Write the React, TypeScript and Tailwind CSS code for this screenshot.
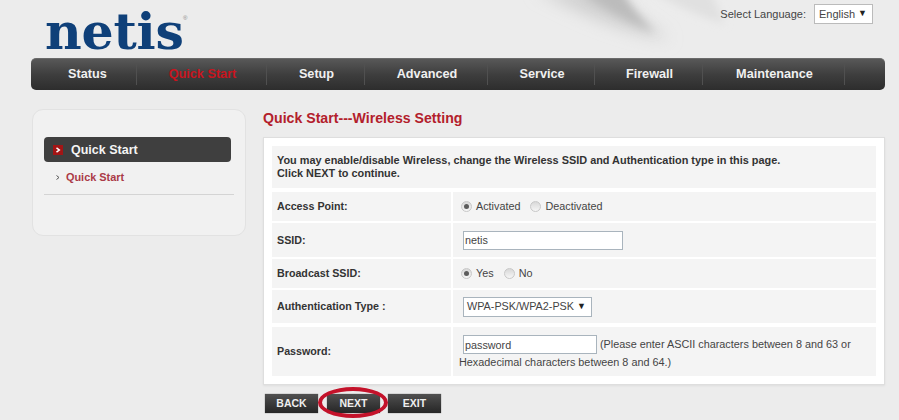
const F = '[font-family:"Liberation_Sans",Arial,sans-serif]';

const navItems: [string, string][] = [
  ["Status", "w-[100px]"],
  ["Quick Start", "w-[130px]"],
  ["Setup", "w-[98px]"],
  ["Advanced", "w-[123px]"],
  ["Service", "w-[107px]"],
  ["Firewall", "w-[108px]"],
  ["Maintenance", "w-[142px]"],
];

function Radio({ on }: { on?: boolean }) {
  return (
    <span className="relative mr-[4px] inline-block h-[11px] w-[11px] rounded-full border border-[#c8c8c8] bg-gradient-to-b from-[#d8d8d8] to-[#f6f6f6]">
      {on && <span className="absolute left-[2px] top-[2px] h-[5px] w-[5px] rounded-full bg-[#5c5c5c]" />}
    </span>
  );
}

function Row({ label, h, mb, children }: { label: string; h: string; mb: string; children: React.ReactNode }) {
  return (
    <div className={`flex gap-[2px] ${h} ${mb}`}>
      <div className="flex w-[179px] items-center bg-[#f4f4f4] pl-[5px] text-[10.7px] font-bold text-[#333]">{label}</div>
      <div className="flex flex-1 items-center bg-[#f4f4f4] pl-[8px] text-[10.8px] text-[#444]">{children}</div>
    </div>
  );
}

function TextBox({ value, w }: { value: string; w: string }) {
  return (
    <input
      readOnly
      value={value}
      className={`h-[19px] ${w} border border-[#a9b4bd] bg-white pl-[1px] text-[10.8px] text-[#444] outline-none`}
    />
  );
}

function Btn({ children }: { children: React.ReactNode }) {
  return (
    <div className="flex h-[19px] w-[53px] items-center justify-center bg-gradient-to-b from-[#505050] to-[#262626] text-[10.5px] font-bold text-[#eee] shadow-[0_0_1px_#666]">
      {children}
    </div>
  );
}

export default function App() {
  return (
    <div className={`relative h-[420px] w-[899px] overflow-hidden bg-[#ececec] ${F}`}>
      <svg className="absolute left-[500px] top-0 h-[70px] w-[320px]" viewBox="0 0 320 70">
        <defs>
          <filter id="b1" x="-40%" y="-60%" width="180%" height="220%"><feGaussianBlur stdDeviation="8" /></filter>
          <filter id="b2" x="-40%" y="-60%" width="180%" height="220%"><feGaussianBlur stdDeviation="4" /></filter>
        </defs>
        <path d="M35 -10 C65 5 110 30 170 40 C145 22 125 8 110 -10Z" fill="#d0d0d0" filter="url(#b1)" />
        <path d="M75 -10 C100 5 125 22 155 33 C138 16 128 3 122 -10Z" fill="#bcbcbc" filter="url(#b2)" />
        <path d="M150 -10 C175 6 200 16 225 24 L210 -10Z" fill="#e0e0e0" filter="url(#b2)" />
      </svg>

      <div className="relative flex h-[58px] justify-between">
        <div className="relative pl-[45px]">
          <span className="block font-['DejaVu_Serif',serif] text-[50.5px] font-bold leading-[64px] tracking-[-0.2px] text-[#0f4079]">
            netis
          </span>
          <span className="absolute left-[183px] top-[14px] text-[6px] leading-[8px] text-[#888]">®</span>
        </div>
        <div className="mt-[4px] flex h-[20px] items-center pr-[26px]">
          <span className="mr-[8px] text-[11px] text-[#444]">Select Language:</span>
          <div className="flex h-[20px] w-[59px] items-center justify-between border border-[#bbb] bg-white pl-[4px] pr-[5px] text-[11px] text-[#444]">
            English <span className="text-[9px] text-[#222]">▼</span>
          </div>
        </div>
      </div>

      <nav className="relative mx-[31px] mr-[14px] flex h-[32px] rounded-[5px] border-t border-[#6a6a6a] bg-gradient-to-b from-[#585858] via-[#3e3e3e] to-[#2d2d2d] pl-[6px]">
        {navItems.map(([t, w]) => (
          <div key={t} className={`flex ${w} items-center justify-center py-[5px]`}>
            <span className={`flex-1 pl-[2px] text-center text-[12.7px] font-bold ${t === "Quick Start" ? "text-[#c9141e]" : "text-[#f0f0f0]"}`}>{t}</span>
            <span className="h-full w-px bg-[#505050]" />
          </div>
        ))}
      </nav>

      <div className="relative flex pl-[32px] pr-[15px] pt-[19px]">
        <aside className="h-[127px] w-[214px] rounded-[11px] border border-[#e2e2e2] bg-[#f1f1f1] px-[11px] pt-[27px]">
          <div className="flex h-[25px] w-[187px] items-center rounded-[4px] bg-[#3f3f3f] pl-[9px]">
            <span className="flex h-[10px] w-[10px] items-center justify-center bg-[#a31515]">
              <svg width="6" height="6" viewBox="0 0 6 6" fill="none" stroke="#fff" strokeWidth="1.5"><path d="M1.5 0.8 L4.3 3 L1.5 5.2" /></svg>
            </span>
            <span className="ml-[8px] pt-[1px] text-[12.5px] font-bold text-[#f4f4f4]">Quick Start</span>
          </div>
          <div className="flex h-[30px] items-center pl-[12px]">
            <svg width="4" height="5" viewBox="0 0 4 5" fill="none" stroke="#555"><path d="M0.5 0.5 L3 2.5 L0.5 4.5" /></svg>
            <span className="ml-[6px] text-[10.9px] font-bold text-[#ab3a47]">Quick Start</span>
          </div>
          <div className="mt-[2px] h-px w-[190px] bg-[#d4d4d4]" />
        </aside>

        <main className="ml-[17px] flex-1">
          <h1 className="h-[28px] text-[14.15px] font-bold leading-[18px] text-[#b3202b]">Quick Start---Wireless Setting</h1>
          <div className="h-[248px] w-[622px] border border-[#dedede] bg-white px-[8px] pt-[8px] shadow-[0_1px_2px_#ddd]">
            <div className="mb-[4px] flex h-[42px] flex-col justify-center bg-[#f4f4f4] pl-[5px] text-[10.9px] font-bold leading-[13px] text-[#333]">
              <p>You may enable/disable Wireless, change the Wireless SSID and Authentication type in this page.</p>
              <p>Click NEXT to continue.</p>
            </div>
            <Row label="Access Point:" h="h-[29px]" mb="mb-[2px]">
              <Radio on /><span className="mr-[10px]">Activated</span><Radio /><span>Deactivated</span>
            </Row>
            <Row label="SSID:" h="h-[34px]" mb="mb-[2px]">
              <span className="ml-[2px] flex"><TextBox value="netis" w="w-[160px]" /></span>
            </Row>
            <Row label="Broadcast SSID:" h="h-[29px]" mb="mb-[2px]">
              <Radio on /><span className="mr-[10px]">Yes</span><Radio /><span>No</span>
            </Row>
            <Row label="Authentication Type :" h="h-[33px]" mb="mb-[4px]">
              <div className="ml-[2px] flex h-[20px] w-[129px] items-center justify-between border border-[#a9b4bd] bg-white pl-[3px] pr-[5px] text-[10.8px] text-[#444]">
                WPA-PSK/WPA2-PSK <span className="text-[9px] text-[#222]">▼</span>
              </div>
            </Row>
            <div className="flex h-[49px] gap-[2px]">
              <div className="flex w-[179px] items-center bg-[#f4f4f4] pl-[5px] text-[10.7px] font-bold text-[#333]">Password:</div>
              <div className="flex-1 bg-[#f4f4f4] pl-[6px] pt-[8px] text-[10.85px] leading-[17px] text-[#444]">
                <div className="flex items-center pl-[4px]">
                  <TextBox value="password" w="w-[134px]" />
                  <span className="ml-[3px]">(Please enter ASCII characters between 8 and 63 or</span>
                </div>
                <div>Hexadecimal characters between 8 and 64.)</div>
              </div>
            </div>
          </div>
          <div className="relative ml-[2px] mt-[9px] flex">
            <Btn>BACK</Btn>
            <div className="relative ml-[9px]">
              <Btn>NEXT</Btn>
              <span className="absolute -left-[9px] -top-[7px] h-[31px] w-[70px] rounded-[50%] border-[4px] border-[#c4122a]" />
            </div>
            <div className="ml-[8px]"><Btn>EXIT</Btn></div>
          </div>
        </main>
      </div>
    </div>
  );
}
